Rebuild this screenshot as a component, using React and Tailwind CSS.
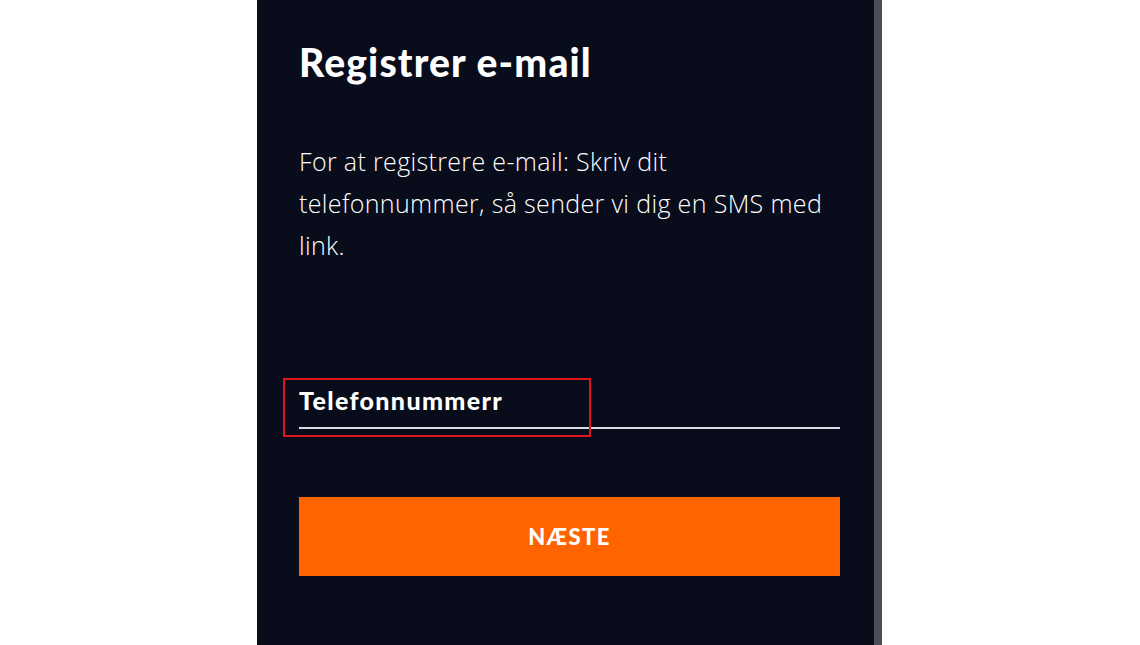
import React, { useState } from "react";

const App = () => {
  const [phone, setPhone] = useState("");

  return (
    <div className="flex min-h-screen h-[645px] bg-white" style={{ fontFamily: "Lato, 'Open Sans', sans-serif" }}>
      <div className="ml-[257px] flex h-full">
        <div className="w-[617px] h-full bg-[#080c1b] pl-[42px] pr-[34px] pt-[38px]">
          <h1 className="text-[39px] leading-[48px] font-black text-white tracking-[1.15px]">Registrer e-mail</h1>
          <p className="mt-[54px] text-[25px] leading-[42px] font-light text-white tracking-[0.35px]" style={{ fontFamily: "'Open Sans', Lato, sans-serif" }}>
            For at registrere e-mail: Skriv dit
            <br />
            telefonnummer, så sender vi dig en SMS med
            <br />
            link.
          </p>
          <div className="relative mt-[121px]">
            <input
              value={phone}
              onChange={(e) => setPhone(e.target.value)}
              placeholder="Telefonnummerr"
              className="w-full bg-transparent pb-[14px] text-[25px] leading-[26px] font-black tracking-[1.35px] text-white placeholder:text-white outline-none border-b-2 border-[#d9dbe2]"
            />
            <div className="absolute left-[-16px] top-[-9px] w-[308px] h-[59px] border-2 border-[#e0141e] pointer-events-none"></div>
          </div>
          <button className="mt-[68px] w-full h-[79px] bg-[#ff6400] text-white text-[22px] font-black tracking-[1.4px]">
            NÆSTE
          </button>
        </div>
        <div className="w-[8px] h-full bg-[#4a4e58]"></div>
      </div>
    </div>
  );
};

export default App;
